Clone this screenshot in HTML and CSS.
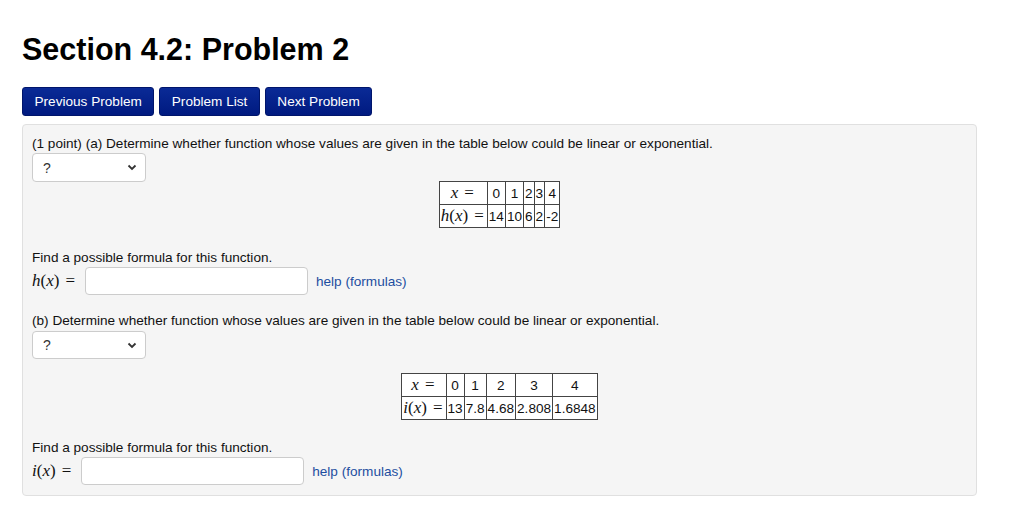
FILE: index.html
```html
<!DOCTYPE html>
<html>
<head>
<meta charset="utf-8">
<link rel="stylesheet" href="styles.css">
</head>
<body>
<div class="page">
  <h1 class="title">Section 4.2: Problem 2</h1>
  <div class="nav">
    <button class="btn">Previous Problem</button>
    <button class="btn">Problem List</button>
    <button class="btn">Next Problem</button>
  </div>
  <div class="panel">
    <p class="line">(1 point) (a) Determine whether function whose values are given in the table below could be linear or exponential.</p>
    <div class="select s1"><span>?</span><svg width="10" height="7" viewBox="0 0 10 7"><path d="M1.5 1.5 L5 5 L8.5 1.5" fill="none" stroke="#333" stroke-width="1.8"/></svg></div>
    <div class="tablewrap t1">
      <table class="vt">
        <tr><td class="lab"><span class="mi">x</span><span class="eq">=</span></td><td>0</td><td>1</td><td>2</td><td>3</td><td>4</td></tr>
        <tr><td class="lab"><span class="mi">h</span>(<span class="mi">x</span>)<span class="eq">=</span></td><td>14</td><td>10</td><td>6</td><td>2</td><td>-2</td></tr>
      </table>
    </div>
    <p class="line find">Find a possible formula for this function.</p>
    <div class="answer">
      <span class="math"><span class="mi">h</span>(<span class="mi">x</span>)<span class="eq">=</span></span>
      <div class="input"></div>
      <a class="help">help (formulas)</a>
    </div>
    <p class="line partb">(b) Determine whether function whose values are given in the table below could be linear or exponential.</p>
    <div class="select s2"><span>?</span><svg width="10" height="7" viewBox="0 0 10 7"><path d="M1.5 1.5 L5 5 L8.5 1.5" fill="none" stroke="#333" stroke-width="1.8"/></svg></div>
    <div class="tablewrap t2">
      <table class="vt">
        <tr><td class="lab"><span class="mi">x</span><span class="eq">=</span></td><td>0</td><td>1</td><td>2</td><td>3</td><td>4</td></tr>
        <tr><td class="lab"><span class="mi">i</span>(<span class="mi">x</span>)<span class="eq">=</span></td><td>13</td><td>7.8</td><td>4.68</td><td>2.808</td><td>1.6848</td></tr>
      </table>
    </div>
    <p class="line find find2">Find a possible formula for this function.</p>
    <div class="answer">
      <span class="math"><span class="mi">i</span>(<span class="mi">x</span>)<span class="eq">=</span></span>
      <div class="input"></div>
      <a class="help">help (formulas)</a>
    </div>
  </div>
</div>
</body>
</html>
```
FILE: styles.css
```css
html, body {
  margin: 0;
  padding: 0;
  background: #fff;
}
body {
  font-family: "Liberation Sans", Arial, sans-serif;
  color: #111;
  font-size: 13.6px;
}
.page {
  padding: 30px 47px 0 22px;
}
.title {
  margin: 0;
  font-size: 30.5px;
  line-height: 38px;
  font-weight: bold;
  color: #000;
}
.nav {
  display: flex;
  gap: 5px;
  margin-top: 19px;
}
.btn {
  font-family: "Liberation Sans", Arial, sans-serif;
  font-size: 13.6px;
  color: #fff;
  background: linear-gradient(#0a2a96, #001a80);
  border: 1px solid #00156b;
  border-radius: 3px;
  height: 29px;
  padding: 0 11.5px;
}
.panel {
  margin-top: 8px;
  background: #f5f5f5;
  border: 1px solid #e0e0e0;
  border-radius: 4px;
  padding: 9px 9px 10px;
}
.line {
  margin: 0;
  line-height: 19px;
}
.select {
  display: flex;
  justify-content: space-between;
  align-items: center;
  box-sizing: border-box;
  width: 114px;
  height: 29px;
  background: #fff;
  border: 1px solid #ccc;
  border-radius: 4px;
  padding: 0 8px 0 10px;
  font-size: 14px;
  color: #333;
}
.s2 {
  height: 28px;
  margin-top: 1px;
}
.tablewrap {
  display: flex;
  justify-content: center;
}
.t1 {
  margin-top: -1px;
}
.t2 {
  margin-top: 14px;
}
.vt {
  border-collapse: collapse;
  background: #fff;
  font-size: 13.6px;
}
.vt td {
  border: 1px solid #444;
  padding: 0 1px;
  height: 22px;
  text-align: center;
}
.vt td.lab {
  padding: 0 3px 0 1px;
  font-family: "Liberation Serif", "Times New Roman", serif;
  font-size: 17px;
  white-space: nowrap;
}
.mi {
  font-style: italic;
}
.eq {
  margin-left: 6px;
}
.find {
  margin-top: 20px;
}
.find2 {
  margin-top: 18px;
}
.answer {
  display: flex;
  align-items: center;
}
.math {
  font-family: "Liberation Serif", "Times New Roman", serif;
  font-size: 17px;
  white-space: nowrap;
  margin-right: 10px;
}
.input {
  box-sizing: border-box;
  width: 223px;
  height: 28px;
  background: #fff;
  border: 1px solid #ccc;
  border-radius: 4px;
  margin-right: 8px;
}
.help {
  color: #1d4ea0;
}
.partb {
  margin-top: 16px;
}
```
